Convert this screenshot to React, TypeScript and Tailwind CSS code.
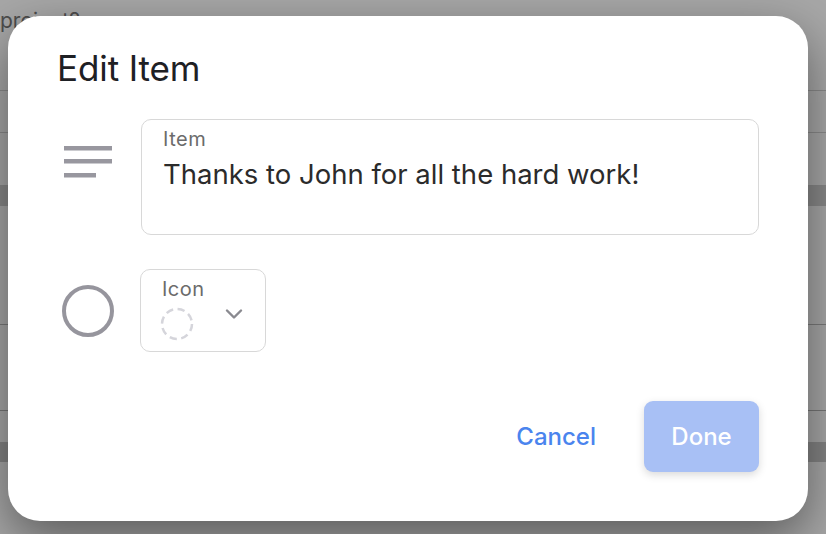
import { ChevronDown } from 'lucide-react';

function LinesIcon() {
  return (
    <svg width="48" height="32" viewBox="0 0 48 32" className="block">
      <rect x="0" y="0" width="48" height="4.5" fill="#98979f" />
      <rect x="0" y="13" width="48" height="4.5" fill="#98979f" />
      <rect x="0" y="27" width="32" height="4.5" fill="#98979f" />
    </svg>
  );
}

function CircleIcon() {
  return (
    <svg width="52" height="52" viewBox="0 0 52 52" className="block">
      <circle cx="26" cy="26" r="24" fill="none" stroke="#96959d" strokeWidth="4" />
    </svg>
  );
}

function DashedCircle() {
  return (
    <svg width="34" height="34" viewBox="0 0 34 34" className="block">
      <circle cx="17" cy="17" r="15" fill="none" stroke="#d5d5db" strokeWidth="2.5" strokeDasharray="7.3 4.5" />
    </svg>
  );
}

export default function App() {
  return (
    <div className="relative h-[534px] w-[826px] overflow-hidden bg-[#a7a7a7] font-['Inter',sans-serif]">
      {/* dimmed page behind the dialog */}
      <div className="flex flex-col">
        <div className="h-[91px] border-b border-[#8a8a8a] pt-[8px] text-[21px] leading-[26px] text-[#4d4d4d]">project?</div>
        <div className="h-[42px] border-b border-[#8a8a8a]" />
        <div className="h-[53px] border-b border-[#888888]" />
        <div className="h-[20px] bg-[#898989]" />
        <div className="h-[119px] border-b border-[#7a7a7a]" />
        <div className="h-[86px] border-b border-[#767676]" />
        <div className="h-[31px]" />
        <div className="h-[20px] bg-[#848484]" />
      </div>

      <div className="absolute inset-0 pl-[8px] pt-[16px]">
        <div className="flex h-[505px] w-[800px] flex-col rounded-[32px] bg-white px-[49px] pt-[31px] shadow-[0_18px_50px_rgba(0,0,0,0.45)]">
          <h1 className="text-[35px] leading-[42px] font-normal tracking-[-0.1px] text-[#1e2024]">Edit Item</h1>

          <div className="mt-[30px] flex items-start">
            <div className="ml-[7px] mt-[27px] w-[48px]">
              <LinesIcon />
            </div>
            <div className="ml-[29px] h-[116px] flex-1 rounded-[10px] border-[1.5px] border-[#d8d8d8] px-[21px] pt-[8px]">
              <div className="text-[20px] leading-[22px] tracking-[0.5px] text-[#6b6b6b]">Item</div>
              <div className="mt-[8px] text-[27.5px] leading-[32px] text-[#2b2b2b]">Thanks to John for all the hard work!</div>
            </div>
          </div>

          <div className="mt-[34px] flex items-center">
            <div className="ml-[5px] w-[52px]">
              <CircleIcon />
            </div>
            <div className="ml-[26px] flex h-[83px] w-[126px] items-start rounded-[10px] border-[1.5px] border-[#d8d8d8] pl-[21px] pt-[8px]">
              <div className="flex flex-col">
                <div className="text-[20px] leading-[22px] tracking-[0.5px] text-[#6b6b6b]">Icon</div>
                <div className="mt-[7px] -ml-[2px]">
                  <DashedCircle />
                </div>
              </div>
              <ChevronDown className="ml-[15px] mt-[22px] h-[28px] w-[28px] text-[#8a8a90]" strokeWidth={2.1} />
            </div>
          </div>

          <div className="mt-[49px] flex items-center justify-end">
            <button className="mr-[48px] text-[24px] font-medium leading-[30px] text-[#4a84ee]">Cancel</button>
            <button className="flex h-[71px] w-[115px] items-center justify-center rounded-[9px] bg-[#a8c0f5] text-[24px] font-medium text-white shadow-[0_3px_8px_rgba(0,0,0,0.15)]">
              Done
            </button>
          </div>
        </div>
      </div>
    </div>
  );
}
